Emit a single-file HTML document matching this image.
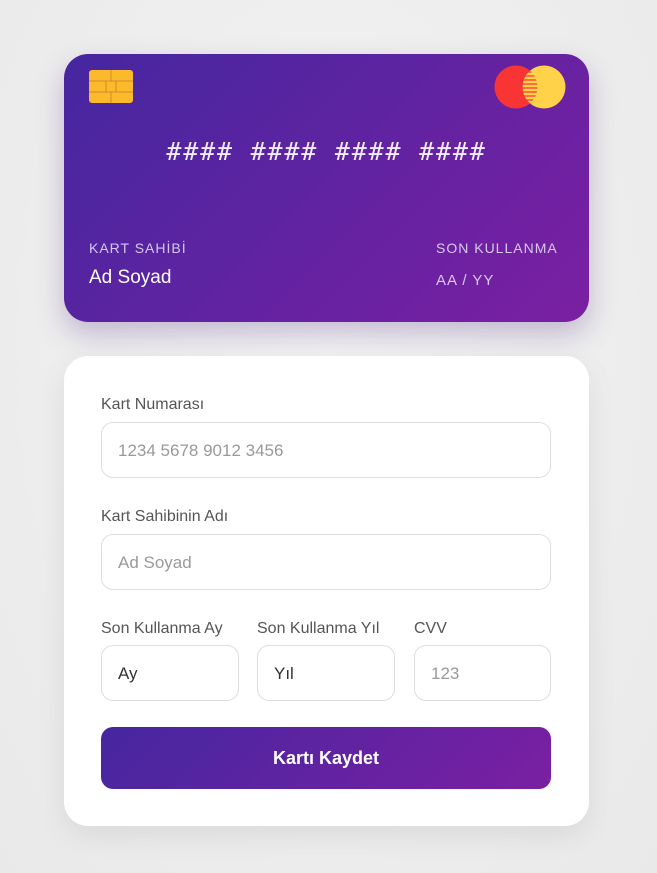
<!DOCTYPE html>
<html><head><meta charset="utf-8"><style>
*{box-sizing:border-box;margin:0;padding:0}
body{width:657px;height:873px;background:radial-gradient(ellipse at 50% 40%,#f4f4f4,#e9e9e9);font-family:"Liberation Sans",sans-serif;position:relative;overflow:hidden}
.card{position:absolute;left:64px;top:54px;width:525px;height:268px;border-radius:24px;background:linear-gradient(135deg,#4527a0,#7b1fa2);box-shadow:0 12px 28px rgba(60,20,120,.25);color:#fff}
.chip{position:absolute;left:25px;top:16px;width:44px;height:33px;border-radius:3px;background:#fbb92c;overflow:hidden}
.mc{position:absolute;top:11px}
.num{position:absolute;left:0;right:0;top:83px;text-align:center;font-family:"DejaVu Sans Mono","Liberation Mono",monospace;font-size:25px;letter-spacing:1.8px;color:#f1ebfa}
.lab{position:absolute;top:186px;font-size:14px;letter-spacing:1px;color:#d6c8ee}
.val{position:absolute;font-size:19px}
.form{position:absolute;left:64px;top:356px;width:525px;height:470px;background:#fff;border-radius:24px;box-shadow:0 10px 30px rgba(0,0,0,.08)}
.l{position:absolute;font-size:16px;color:#555}
.in{position:absolute;height:56px;border:1px solid #ddd;border-radius:12px;font-size:17px;color:#999;padding-left:16px;line-height:56px}
.btn{position:absolute;left:37px;top:371px;width:450px;height:62px;border-radius:12px;background:linear-gradient(135deg,#4527a0,#7b1fa2);color:#fff;font-weight:bold;font-size:18px;text-align:center;line-height:62px}
</style></head><body>
<div class="card">
 <div class="chip"><svg width="44" height="33" viewBox="0 0 44 33"><g stroke="#d08a2a" stroke-width="1" fill="none"><rect x="17" y="11" width="10" height="11"/><path d="M0 11H17M0 22H17M27 11H44M27 22H44M22 0V11M22 22V33"/></g></svg></div>
 <svg class="mc" style="left:430px" width="72" height="44" viewBox="0 0 72 44"><circle cx="22" cy="22" r="21.5" fill="#f93434"/><circle cx="50" cy="22" r="21.5" fill="#ffd24a"/><clipPath id="c"><circle cx="22" cy="22" r="21.5"/></clipPath><g clip-path="url(#c)" stroke="#f93434" stroke-width="1.3"><path d="M26 7H46M26 11H46M26 15H46M26 19H46M26 23H46M26 27H46M26 31H46M26 35H46"/></g></svg>
 <div class="num">#### #### #### ####</div>
 <div class="lab" style="left:25px">KART SAHİBİ</div>
 <div class="lab" style="left:372px">SON KULLANMA</div>
 <div class="val" style="left:25px;top:213px">Ad Soyad</div>
 <div class="val" style="left:372px;top:218px;font-size:15px;letter-spacing:1px;color:#d6c8ee">AA / YY</div>
</div>
<div class="form">
 <div class="l" style="left:37px;top:40px">Kart Numarası</div>
 <div class="in" style="left:37px;top:66px;width:450px">1234 5678 9012 3456</div>
 <div class="l" style="left:37px;top:152px">Kart Sahibinin Adı</div>
 <div class="in" style="left:37px;top:178px;width:450px">Ad Soyad</div>
 <div class="l" style="left:37px;top:264px">Son Kullanma Ay</div>
 <div class="l" style="left:193px;top:264px">Son Kullanma Yıl</div>
 <div class="l" style="left:350px;top:264px">CVV</div>
 <div class="in" style="left:37px;top:289px;width:138px;color:#333">Ay</div>
 <div class="in" style="left:193px;top:289px;width:138px;color:#333">Yıl</div>
 <div class="in" style="left:350px;top:289px;width:137px">123</div>
 <div class="btn">Kartı Kaydet</div>
</div>
</body></html>
